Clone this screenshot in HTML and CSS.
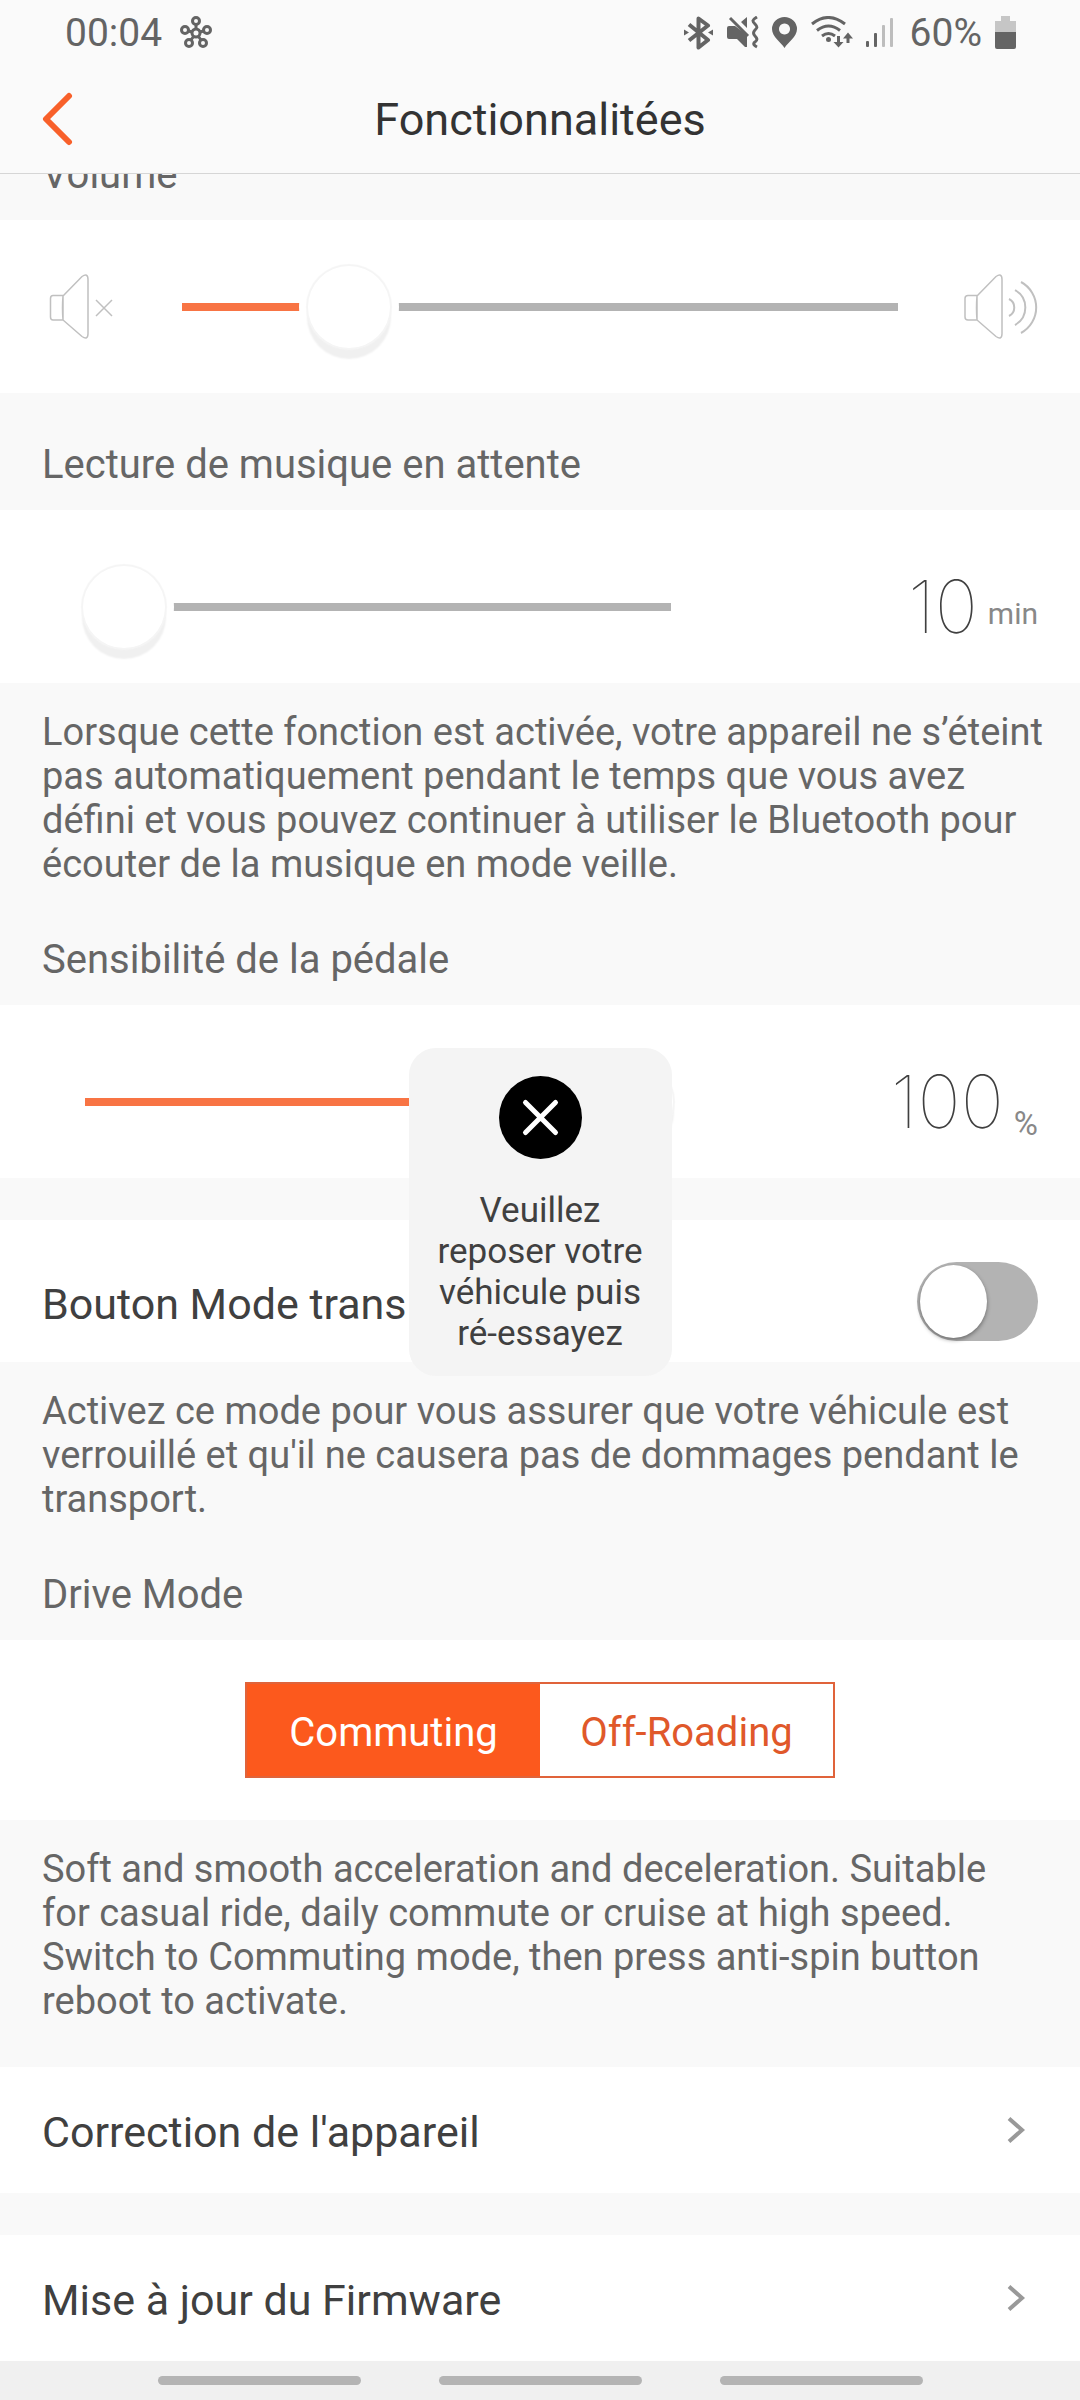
FILE: index.html
```
<!DOCTYPE html>
<html lang="fr">
<head>
    <meta charset="UTF-8">
    <meta name="viewport" content="width=device-width, initial-scale=1.0">
    <title>Fonctionnalitées</title>
    <link rel="stylesheet" href="styles.css">
</head>
<body>
    <header class="header">
        <!-- Barre d'état -->
        <div class="status">
            <span>00:04</span>
            <svg class="status-app" width="32" height="34" viewBox="181 16 32 34" fill="none" stroke="#646464" stroke-width="3">
                <circle cx="197" cy="33" r="4"/>
                <circle cx="197" cy="21" r="3.5"/>
                <circle cx="186" cy="30" r="3.5"/>
                <circle cx="208" cy="30" r="3.5"/>
                <circle cx="190" cy="43" r="3.5"/>
                <circle cx="204" cy="43" r="3.5"/>
                <path d="M197 25v4M189.500 31l3.500 1M204.500 31l-3.500 1M192 40l2.500-3.500M202 40l-2.500-3.500"/>
            </svg>
            <div class="status-right">
                <svg width="30" height="34" viewBox="683 15 30 34" fill="none" stroke="#646464" stroke-width="4">
                    <path d="M688 23.500l19 15.500-9.500 7.500V17.500l9.500 7L688 39.500" stroke-linejoin="round"/>
                    <path d="M683 28.500l5 3-5 3zM712 28.500l-5 3 5 3z" fill="#646464" stroke="none"/>
                </svg>
                <svg width="32" height="34" viewBox="727 15 32 34" fill="none" stroke="#646464" stroke-width="3">
                    <path d="M727 27q0-2 2-2h6l12 9v12h-2l-8-8h-8q-2 0-2-2zM741 21l6-5v11z" fill="#646464" stroke="none"/>
                    <path d="M730 17l18 18"/>
                    <path d="M757 16c-5 3-5 4-2 7s2 4 0 6-2 4 0 6 3 4 0 6 0 4 2 5"/>
                </svg>
                <svg width="26" height="34" viewBox="774 15 26 34" fill="#646464" fill-rule="evenodd">
                    <path d="M786.500 16a12.500 12 0 0 1 12.500 12c0 8-9 13-12.500 19-3.500-6-12.500-11-12.500-19a12.500 12 0 0 1 12.500-12zM786.500 22.500a5.500 5.500 0 1 0 .01 0z"/>
                </svg>
                <svg width="42" height="34" viewBox="814 15 42 34" fill="none" stroke="#646464" stroke-width="3">
                    <path d="M815 23q16-13 33 0M820 29.500q11.500-9 23 0M825 35q6.500-5 13 0"/>
                    <circle cx="831.500" cy="38.500" r="2.500" fill="#646464" stroke="none"/>
                    <path d="M841.500 35v8M851 42v-8"/>
                    <path d="M836.500 41h10l-5 5.500zM846 37.500h10l-5-6z" fill="#646464" stroke="none"/>
                </svg>
                <svg width="28" height="34" viewBox="867 15 28 34" fill="#646464">
                    <rect x="867" y="40" width="3" height="6" rx="1"/>
                    <rect x="875" y="32" width="3" height="14" rx="1"/>
                    <rect x="883" y="24" width="3" height="22" rx="1" fill="#bdbdbd"/>
                    <rect x="891" y="17" width="3" height="29" rx="1" fill="#bdbdbd"/>
                </svg>
                <span class="battery-text">60%</span>
                <svg width="22" height="34" viewBox="995 15 22 34" fill="#646464">
                    <path d="M1001 15h9v5h6v11h-21V20h6z" fill="#c6c6c6"/>
                    <path d="M995 31h21v15q0 2-2 2h-17q-2 0-2-2z"/>
                </svg>
            </div>
        </div>

        <!-- Titre de la page -->
        <div class="titlebar">
            <button class="back" type="button" aria-label="Retour">
                <svg width="32" height="56" viewBox="42 91 32 56" fill="none" stroke="#f8602a" stroke-width="6" stroke-linecap="round" stroke-linejoin="round">
                    <path d="M69 95L46 118l23 23"/>
                </svg>
            </button>
            <h1>Fonctionnalitées</h1>
        </div>
    </header>

    <main class="content">
        <!-- Volume -->
        <label class="heading" for="volume">Volume</label>
        <div class="panel volume">
            <svg width="74" height="66" viewBox="42 275 74 66" fill="none" stroke="#c0c0c0" stroke-width="1.500">
                <path d="M63 296.500H53q-2.500 0-2.500 3V318q0 3 2.500 3h10zM63 297l19-19.500q6-4 6 3v54q0 7-6 3L63 321q-1-12 0-24z"/>
                <path d="M96 301l16 16M112 301l-16 16"/>
            </svg>
            <input class="slider slider-volume" type="range" id="volume" min="0" max="100" value="20">
            <svg width="74" height="66" viewBox="964 275 74 66" fill="none" stroke="#c0c0c0" stroke-width="1.500">
                <path d="M977 296.500h-9q-3 0-3 3V318q0 3 3 3h9zM977 297l19-19.500q6-4 6 3v54q0 7-6 3l-19-16.500q-1-12 0-24z"/>
                <path d="M1009 300a9.500 9.500 0 0 1 0 17M1015 291a20 20 0 0 1 0 35M1021 283a29 29 0 0 1 0 51" stroke-width="2"/>
            </svg>
        </div>

        <!-- Lecture de musique -->
        <label class="heading" for="music">Lecture de musique en attente</label>
        <div class="panel setting">
            <input class="slider slider-min" type="range" id="music" min="10" max="60" value="10">
            <div class="value">
                <span class="number">10</span>
                <span class="unit unit-small">min</span>
            </div>
        </div>
        <p class="note">Lorsque cette fonction est activée, votre appareil ne s’éteint pas automatiquement pendant le temps que vous avez défini et vous pouvez continuer à utiliser le Bluetooth pour écouter de la musique en mode veille.</p>

        <!-- Sensibilité -->
        <label class="heading" for="pedal">Sensibilité de la pédale</label>
        <div class="panel setting">
            <input class="slider slider-max" type="range" id="pedal" min="0" max="100" value="100">
            <div class="value">
                <span class="number">100</span>
                <span class="unit">%</span>
            </div>
        </div>

        <!-- Mode transport -->
        <div class="panel transport">
            <label class="row-text" for="transport">Bouton Mode trans</label>
            <input class="toggle" type="checkbox" id="transport">
        </div>
        <p class="note">Activez ce mode pour vous assurer que votre véhicule est verrouillé et qu'il ne causera pas de dommages pendant le transport.</p>

        <!-- Drive Mode -->
        <h2 class="heading">Drive Mode</h2>
        <div class="panel drive">
            <div class="segmented">
                <button class="active" type="button">Commuting</button>
                <button type="button">Off-Roading</button>
            </div>
        </div>
        <p class="note">Soft and smooth acceleration and deceleration. Suitable<br>for casual ride, daily commute or cruise at high speed. Switch to Commuting mode, then press anti-spin button reboot to activate.</p>

        <a class="panel link" href="#">
            <span class="row-text">Correction de l'appareil</span>
            <svg width="20" height="30" viewBox="1006 2115 20 30" fill="none" stroke="#999" stroke-width="4">
                <path d="M1008 2118.500l13 11.500-13 11.500"/>
            </svg>
        </a>
        <a class="panel link" href="#">
            <span class="row-text">Mise à jour du Firmware</span>
            <svg width="20" height="30" viewBox="1006 2115 20 30" fill="none" stroke="#999" stroke-width="4">
                <path d="M1008 2118.500l13 11.500-13 11.500"/>
            </svg>
        </a>
    </main>

    <!-- Barre de navigation du système -->
    <div class="navbar">
        <span></span>
        <span></span>
        <span></span>
    </div>

    <!-- Message d'erreur -->
    <div class="overlay">
        <div class="toast" role="alert">
            <svg width="83" height="83" viewBox="0 0 83 83">
                <circle cx="41.500" cy="41.500" r="41.500"/>
                <path d="M26.500 26.500l30 30M56.500 26.500l-30 30" stroke="#fff" stroke-width="5" stroke-linecap="round"/>
            </svg>
            <p>Veuillez reposer votre véhicule puis ré-essayez</p>
        </div>
    </div>
</body>
</html>
```

FILE: styles.css
```
/* Styles généraux */
* {
    box-sizing: border-box;
}

body {
    margin: 0;
    min-height: 100vh;
    font-family: Roboto, sans-serif;
    background-color: #f9f9f9;
    color: #404040;
}

h1, h2, p {
    margin: 0;
    font-weight: normal;
}

button {
    font-family: inherit;
    cursor: pointer;
}

svg {
    display: block;
    flex: none;
}

/* En-tête */
.header {
    position: sticky;
    top: 0;
    z-index: 1;
    background-color: #fafafa;
    border-bottom: 1px solid #d6d6d6;
}

.status {
    display: flex;
    align-items: center;
    height: 66px;
    padding: 0 63px 0 65px;
    font-size: 39px;
    color: #646464;
}

.status-app {
    margin-left: 18px;
}

.status-right {
    display: flex;
    align-items: center;
    gap: 13px;
    margin-left: auto;
}

.battery-text {
    margin-left: 3px;
}

.titlebar {
    display: grid;
    grid-template-columns: 1fr auto 1fr;
    align-items: center;
    height: 107px;
    padding: 0 42px;
}

.titlebar h1 {
    font-size: 45px;
    color: #333;
}

.back {
    justify-self: start;
    padding: 0;
    border: none;
    background: none;
}

/* Contenu, défilé sous l'en-tête */
.content {
    margin-top: -71px;
}

.heading {
    display: block;
    padding: 49px 42px 22px;
    font-size: 40px;
    line-height: 46px;
    color: #666;
}

.note {
    padding: 27px 30px 2px 42px;
    font-size: 38px;
    line-height: 44px;
    color: #666;
}

.panel {
    display: flex;
    align-items: center;
    padding: 0 42px;
    background-color: #fff;
}

.volume {
    gap: 66px;
    height: 173px;
}

.setting {
    display: grid;
    grid-template-columns: 8fr 5fr;
    height: 173px;
    padding: 20px 42px 0 85px;
}

/* Curseurs */
.slider {
    flex: 1;
    width: 100%;
    min-width: 0;
    height: 84px;
    margin: 0;
    appearance: none;
    background: none;
}

.slider::-webkit-slider-runnable-track {
    height: 8px;
    background-color: #b3b3b3;
}

.slider-volume::-webkit-slider-runnable-track {
    background: linear-gradient(to right, #f87444 20%, #b3b3b3 20%);
}

.slider-max::-webkit-slider-runnable-track {
    background-color: #f87444;
}

.slider::-webkit-slider-thumb {
    appearance: none;
    width: 78px;
    height: 78px;
    margin-top: -35px;
    border-radius: 50%;
    background-color: #fff;
    box-shadow: 0 0 0 2px #fff, 0 0 1px 4px #f5f5f5, 0 10px 2px 3px #f0f0f0, 0 0 0 11px #fff;
}

.value {
    display: flex;
    justify-content: flex-end;
    align-items: flex-end;
    gap: 10px;
}

.number {
    font-family: Inter, sans-serif;
    font-size: 73px;
    font-weight: 100;
    line-height: 84px;
}

.unit {
    font-size: 33px;
    line-height: 40px;
    color: #888;
}

.unit-small {
    margin-bottom: 15px;
    font-size: 30px;
}

.row-text {
    padding-top: 4px;
    font-size: 43px;
}

/* Interrupteur */
.transport {
    justify-content: space-between;
    height: 142px;
    margin-top: 42px;
    padding-top: 21px;
}

.toggle {
    width: 121px;
    height: 79px;
    margin: 0;
    padding: 3px;
    appearance: none;
    border-radius: 40px;
    background-color: #b3b3b3;
}

.toggle::before {
    content: "";
    display: block;
    width: 67px;
    height: 73px;
    border-radius: 50%;
    background-color: #fff;
    box-shadow: 0 2px 4px rgba(0, 0, 0, 0.4);
}

.toggle:checked {
    background-color: #fa5a1e;
}

.toggle:checked::before {
    margin-left: auto;
}

/* Choix du mode */
.drive {
    justify-content: center;
    padding: 42px;
}

.segmented {
    display: grid;
    grid-template-columns: 1fr 1fr;
    width: 590px;
    height: 96px;
    border: 2px solid #e0633a;
}

.segmented button {
    padding: 4px 0 0;
    border: none;
    background-color: #fff;
    font-size: 40px;
    color: #e0582a;
}

.segmented .active {
    background-color: #fc591d;
    color: #fff;
}

/* Liens */
.link {
    justify-content: space-between;
    height: 126px;
    margin-top: 42px;
    padding-right: 53px;
    color: #404040;
    text-decoration: none;
}

.navbar {
    display: flex;
    justify-content: center;
    align-items: center;
    gap: 78px;
    height: 39px;
    background-color: #f0f0f0;
}

.navbar span {
    width: 203px;
    height: 9px;
    border-radius: 5px;
    background-color: #b4b4b4;
}

/* Message */
.overlay {
    position: fixed;
    inset: 24px 0 0;
    z-index: 2;
    display: grid;
    place-items: center;
    pointer-events: none;
}

.toast {
    display: flex;
    flex-direction: column;
    align-items: center;
    gap: 31px;
    width: 263px;
    padding: 28px 20px 22px;
    border-radius: 27px;
    background-color: #f4f4f4;
    font-size: 35px;
    line-height: 41px;
    text-align: center;
}
```
